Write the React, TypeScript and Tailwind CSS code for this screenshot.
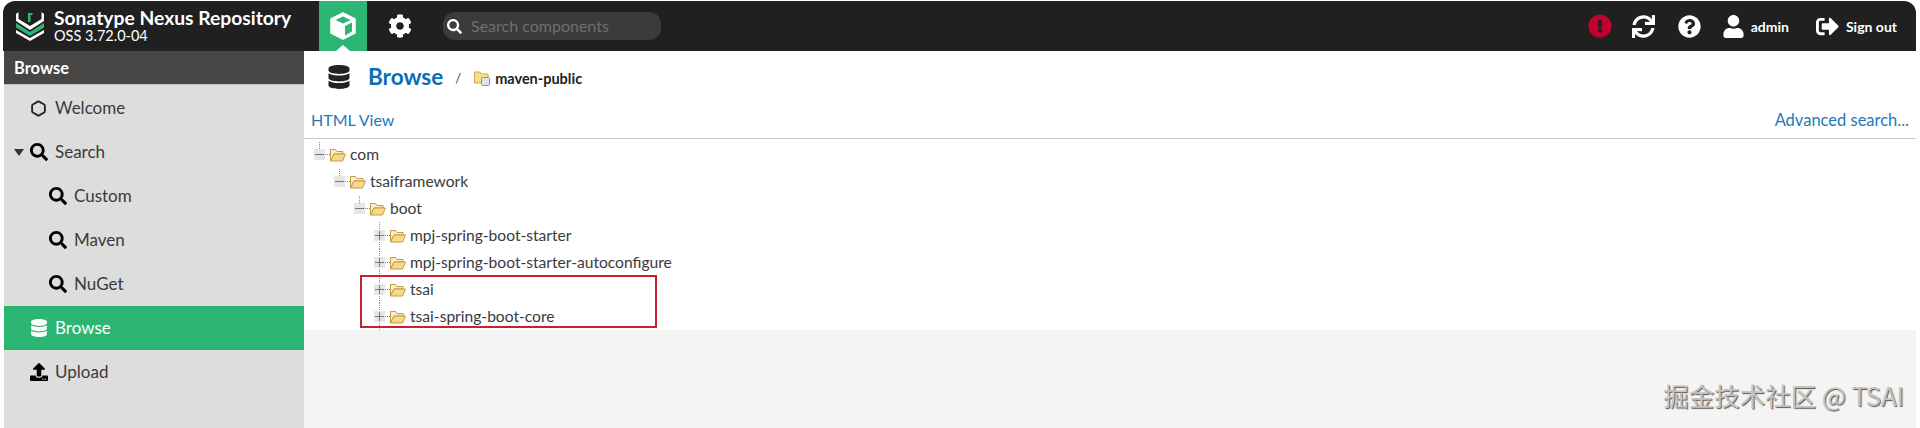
import React from "react";
import { Hexagon } from "lucide-react";
import {
  FaCog,
  FaDatabase,
  FaExclamationCircle,
  FaQuestionCircle,
  FaSearch,
  FaSignOutAlt,
  FaSync,
  FaUpload,
  FaUser,
} from "react-icons/fa";

function Logo() {
  return (
    <svg width="30" height="30" viewBox="0 0 30 30" className="shrink-0">
      <path d="M1 3 L3.5 1 L3.5 8 L15 15 L26.5 8 L26.5 1 L29 3 L29 10 L15 19 L1 10 Z" fill="#fff" />
      <path d="M1 12 L15 21 L29 12 L29 16.5 L15 25 L1 16.5 Z" fill="#2bb673" />
      <path d="M1 19 L15 27 L29 19 L29 22 L15 30 L1 22 Z" fill="#fff" />
      <path d="M13 2 H17.5 V4 H15.5 V11 H13 Z" fill="#2bb673" />
    </svg>
  );
}

function CubeIcon() {
  return (
    <svg width="26" height="28" viewBox="0 0 26 28">
      <path d="M13 1 L25 7 V21 L13 27 L1 21 V7 Z" fill="#fff" stroke="#fff" strokeLinejoin="round" strokeWidth="1.5" />
      <path d="M13 4.5 L20.5 8 L13 11.5 L5.5 8 Z" fill="#2bb673" />
      <path d="M15 14 L22 10.5 V19.5 L15 23.5 Z" fill="#2bb673" />
    </svg>
  );
}

function Header() {
  return (
    <div className="flex h-[50px] items-center rounded-t-xl bg-[#202020] text-white">
      <div className="flex w-[316px] shrink-0 items-center pl-[12px]">
        <Logo />
        <div className="ml-[9px] flex flex-col">
          <span className="text-[19.3px] leading-[20px] font-bold">Sonatype Nexus Repository</span>
          <span className="text-[14.5px] leading-[16px]">OSS 3.72.0-04</span>
        </div>
      </div>
      <div className="relative flex h-full w-[48px] shrink-0 items-center justify-center bg-[#2bb673]">
        <CubeIcon />
        <div className="absolute bottom-0 left-[17px] h-0 w-0 border-x-[7px] border-b-[6px] border-x-transparent border-b-white" />
      </div>
      <FaCog className="ml-[21px] shrink-0 text-[24px]" />
      <div className="ml-[31px] flex h-[28px] w-[218px] shrink-0 items-center rounded-xl bg-[#3b3b3b] pl-[4px]">
        <FaSearch className="text-[15px]" />
        <span className="ml-[9px] text-[16px] text-[#6f6f6f]">Search components</span>
      </div>
      <div className="ml-auto flex items-center pr-[19px]">
        <FaExclamationCircle className="text-[24px] text-[#c0002f]" />
        <FaSync className="ml-[20px] text-[23px]" />
        <FaQuestionCircle className="ml-[23px] text-[23px]" />
        <FaUser className="ml-[21px] text-[23px]" />
        <span className="ml-[6px] text-[14px] font-bold">admin</span>
        <FaSignOutAlt className="ml-[27px] text-[23px]" />
        <span className="ml-[7px] text-[14px] font-bold">Sign out</span>
      </div>
    </div>
  );
}

function NavItem({
  icon,
  label,
  className,
  active,
}: {
  icon: React.ReactNode;
  label: string;
  className: string;
  active?: boolean;
}) {
  return (
    <div
      className={
        "flex h-[44px] items-center text-[17px] " +
        className +
        (active ? " bg-[#2bb673] text-white" : " text-[#3a3a3c]")
      }
    >
      <span className={active ? "flex w-[25px] justify-center text-white" : "flex w-[25px] justify-center text-black"}>{icon}</span>
      <span className="ml-[4px]">{label}</span>
    </div>
  );
}

function Sidebar() {
  return (
    <div className="ml-[1px] flex w-[300px] shrink-0 flex-col bg-[#dddddd]">
      <div className="flex h-[34px] items-center border-b border-[#bdbdbd] bg-[#464646] pt-[2px] pl-[10px] text-[16.5px] font-bold text-white">
        Browse
      </div>
      <div className="h-[1px]" />
      <NavItem className="pl-[22px]" label="Welcome" icon={<Hexagon size={17} strokeWidth={2.6} className="text-[#222]" />} />
      <div className="flex h-[44px] items-center pl-[10px] text-[17px] text-[#3a3a3c]">
        <div className="h-0 w-0 border-x-[5px] border-t-[7px] border-x-transparent border-t-[#333]" />
        <span className="ml-[2px] flex w-[25px] justify-center text-black">
          <FaSearch className="text-[18px]" />
        </span>
        <span className="ml-[4px]">Search</span>
      </div>
      <NavItem className="pl-[41px]" label="Custom" icon={<FaSearch className="text-[18px]" />} />
      <NavItem className="pl-[41px]" label="Maven" icon={<FaSearch className="text-[18px]" />} />
      <NavItem className="pl-[41px]" label="NuGet" icon={<FaSearch className="text-[18px]" />} />
      <NavItem className="pl-[22px]" label="Browse" active icon={<FaDatabase className="text-[18px]" />} />
      <NavItem className="pl-[22px]" label="Upload" icon={<FaUpload className="text-[18px]" />} />
    </div>
  );
}

// tree connector: dotted lines plus the expand/collapse box
function Toggle({ open }: { open: boolean }) {
  return (
    <svg width="16" height="27" viewBox="0 0 16 27" className="shrink-0">
      <line x1="5.5" y1={open ? 1 : 0} x2="5.5" y2={open ? 8 : 27} stroke="#888" strokeWidth="1" strokeDasharray="1 1" />
      <rect x="0" y="8" width="11" height="11" fill="#e6e6e6" />
      <line x1="11" y1="13.5" x2="16" y2="13.5" stroke="#888" strokeWidth="1" strokeDasharray="1 1" />
      <line x1="1" y1="13.5" x2="10" y2="13.5" stroke="#777" strokeWidth="1" />
      {!open && <line x1="5.5" y1="9" x2="5.5" y2="18" stroke="#777" strokeWidth="1" />}
    </svg>
  );
}

function FolderOpen() {
  return (
    <svg width="16" height="14" viewBox="0 0 16 14" className="shrink-0">
      <path d="M0.5 13 V1.5 H5.5 L7 3.5 H13 V6 H4 Z" fill="#fbeec6" stroke="#c39a45" strokeWidth="1" />
      <path d="M0.5 13 L4 6 H15.5 L12.5 13 Z" fill="#f8d98a" stroke="#c39a45" strokeWidth="1" />
    </svg>
  );
}

function TreeRow({ label, open, indent }: { label: string; open?: boolean; indent: string }) {
  return (
    <div className={"flex h-[27px] items-center text-[15.6px] text-[#3a3a3c] " + indent}>
      <Toggle open={!!open} />
      <FolderOpen />
      <span className="ml-[4px]">{label}</span>
    </div>
  );
}

function Content() {
  return (
    <div className="flex min-w-0 flex-1 flex-col">
      <div className="bg-white">
        <div className="flex h-[55px] items-center pb-[4px] pl-[23px]">
          <FaDatabase className="text-[24px] text-[#222]" />
          <span className="ml-[17px] text-[22.5px] leading-[26px] font-bold text-[#0a6eb4]">Browse</span>
          <span className="mt-[4px] ml-[12px] text-[13px] text-[#444]">/</span>
          <svg width="16" height="15" viewBox="0 0 16 15" className="mt-[4px] ml-[13px]">
            <path d="M0.5 12 V1 H6 L7.5 3 H14 V12 Z" fill="#f9dc8c" stroke="#d3a84e" />
            <rect x="7.5" y="6.5" width="8" height="8" rx="1" fill="#dfe4ea" stroke="#8a94a0" />
          </svg>
          <span className="mt-[4px] ml-[5px] text-[14.5px] font-bold text-[#222]">maven-public</span>
        </div>
        <div className="flex h-[33px] items-end justify-between border-b border-[#c8c8c8] px-[7px] pb-[9px] text-[16px] leading-[18px] text-[#1c7ab8]">
          <span>HTML View</span>
          <span className="text-[16.5px]">Advanced search...</span>
        </div>
        <div className="relative pt-[2px] pl-[10px]">
          <TreeRow label="com" open indent="pl-0" />
          <TreeRow label="tsaiframework" open indent="pl-[20px]" />
          <TreeRow label="boot" open indent="pl-[40px]" />
          <TreeRow label="mpj-spring-boot-starter" indent="pl-[60px]" />
          <TreeRow label="mpj-spring-boot-starter-autoconfigure" indent="pl-[60px]" />
          <TreeRow label="tsai" indent="pl-[60px]" />
          <TreeRow label="tsai-spring-boot-core" indent="pl-[60px]" />
          <div className="absolute top-[136px] left-[56px] h-[53px] w-[297px] border-2 border-[#c8202f]" />
        </div>
      </div>
      <div className="flex-1 bg-[#f4f4f4]" />
    </div>
  );
}

export default function App() {
  return (
    <div className="relative flex h-[428px] flex-col bg-white pt-[1px] pr-[4px] pl-[3px] font-['Lato','Noto_Sans_CJK_SC',sans-serif]">
      <Header />
      <div className="flex flex-1">
        <Sidebar />
        <Content />
      </div>
      <div className="absolute right-[16px] bottom-[19px] font-['Noto_Sans_CJK_SC',sans-serif] text-[25.5px] leading-[28px] text-[#c4c4c4] [text-shadow:1px_1px_1px_#555]">
        掘金技术社区 @ TSAI
      </div>
    </div>
  );
}
